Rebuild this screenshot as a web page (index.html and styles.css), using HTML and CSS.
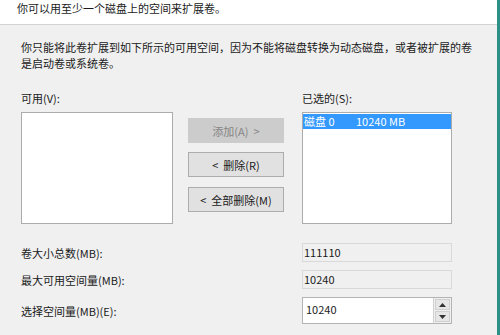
FILE: index.html
```html
<!DOCTYPE html>
<html lang="zh-CN">
<head>
    <meta charset="UTF-8">
    <title>扩展卷向导</title>
    <link rel="stylesheet" href="styles.css">
</head>
<body>
    <div class="dialog">
        <div class="header">你可以用至少一个磁盘上的空间来扩展卷。</div>

        <div class="content">
            <p class="desc">你只能将此卷扩展到如下所示的可用空间，因为不能将磁盘转换为动态磁盘，或者被扩展的卷<br>是启动卷或系统卷。</p>

            <div class="picker">
                <div class="col-label">可用(V):</div>
                <div></div>
                <div class="col-label">已选的(S):</div>

                <div class="listbox"></div>
                <div class="actions">
                    <button class="btn" disabled>添加(A)<span class="arrow-r">&gt;</span></button>
                    <button class="btn"><span class="arrow-l">&lt;</span>删除(R)</button>
                    <button class="btn"><span class="arrow-l">&lt;</span>全部删除(M)</button>
                </div>
                <div class="listbox">
                    <div class="item selected"><span class="disk">磁盘 0</span><span>10240 MB</span></div>
                </div>
            </div>

            <div class="fields">
                <label>卷大小总数(MB):</label>
                <div class="field readonly">111110</div>

                <label>最大可用空间量(MB):</label>
                <div class="field readonly">10240</div>

                <label>选择空间量(MB)(E):</label>
                <div class="field spin">
                    <span class="spin-value">10240</span>
                    <span class="spin-btns">
                        <span class="spin-btn"><svg width="7" height="4" viewBox="0 0 7 4"><path d="M0 4 L3.5 0 L7 4 Z" fill="#333"/></svg></span>
                        <span class="spin-btn"><svg width="7" height="4" viewBox="0 0 7 4"><path d="M0 0 L3.5 4 L7 0 Z" fill="#333"/></svg></span>
                    </span>
                </div>
            </div>
        </div>
    </div>
</body>
</html>
```

FILE: styles.css
```css
html, body {
    margin: 0;
    padding: 0;
}
body {
    width: 500px;
    height: 335px;
    overflow: hidden;
    background: #f0f0f0;
    font-family: "Noto Sans CJK SC", "Liberation Sans", sans-serif;
    font-size: 11px;
    color: #1a1a1a;
}
.dialog {
    width: 497px;
    height: 335px;
    border-right: 3px solid #2c8f88;
    background: #f0f0f0;
}
.header {
    height: 24px;
    line-height: 16px;
    padding-left: 17px;
    background: #fff;
    border-bottom: 1px solid #d2d2d2;
}
.content {
    padding: 14px 0 0 21px;
}
.desc {
    margin: 0;
    line-height: 16px;
}
.picker {
    display: grid;
    grid-template-columns: 152px 129px 150px;
    margin-top: 19px;
}
.col-label {
    line-height: 16px;
    height: 22px;
}
.listbox {
    box-sizing: border-box;
    height: 112px;
    background: #fff;
    border: 1px solid #acacac;
    padding-top: 1px;
}
.actions {
    display: flex;
    flex-direction: column;
    gap: 9px;
    padding: 6px 0 0 15px;
}
.btn {
    width: 96px;
    height: 25px;
    font-family: inherit;
    font-size: 11px;
    color: #1a1a1a;
    background: #e1e1e1;
    border: 1px solid #adadad;
    padding: 0;
}
.btn:nth-child(3) {
    margin-top: 1px;
}
.btn:disabled {
    background: #cccccc;
    border-color: #cccccc;
    color: #858585;
}
.arrow-l {
    margin-right: 5px;
}
.arrow-r {
    margin-left: 5px;
}
.item {
    display: flex;
    height: 15px;
    line-height: 15px;
    padding-left: 1px;
}
.item.selected {
    background: #3399ff;
    color: #fff;
}
.disk {
    width: 52px;
}
.fields {
    display: grid;
    grid-template-columns: 281px 150px;
    align-items: center;
    row-gap: 8px;
    margin-top: 19px;
}
.fields label {
    line-height: 16px;
}
.field {
    box-sizing: border-box;
    height: 19px;
    line-height: 17px;
    padding-left: 1px;
    border: 1px solid #d9d9d9;
}
.field.readonly {
    background: #f0f0f0;
}
.field.spin {
    display: flex;
    height: 27px;
    background: #fff;
    border-color: #b4b4b4;
    padding: 0;
}
.spin-value {
    flex: 1;
    padding: 4px 0 0 3px;
    line-height: 14px;
}
.spin-btns {
    display: flex;
    flex-direction: column;
    gap: 1px;
    width: 15px;
    padding: 1px;
    background: #f0f0f0;
    border-left: 1px solid #d0d0d0;
}
.spin-btn {
    flex: 1;
    display: flex;
    align-items: center;
    justify-content: center;
    background: #e6e6e6;
    border: 1px solid #d0d0d0;
}
```
